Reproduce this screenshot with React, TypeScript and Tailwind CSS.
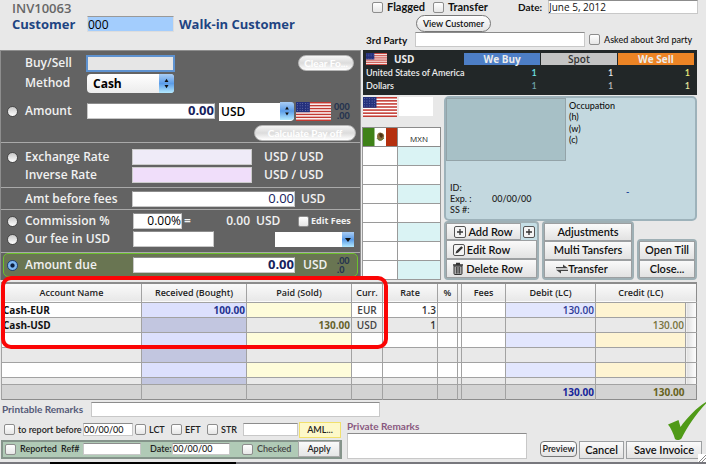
import React from "react";

const CHECK =
  "m-0 h-[11px] w-[11px] shrink-0 appearance-none rounded-[2px] border border-[#8d8d8d] bg-linear-to-b from-white to-[#e6e6e6] checked:bg-[#5b9be0]";
const RADIO =
  "m-0 h-[11px] w-[11px] shrink-0 appearance-none rounded-full border border-[#4a4a4a] bg-linear-to-b from-[#c9c9c9] to-white";
const FIELD =
  "min-w-0 rounded-none border border-[#c8c8c8] border-t-[#8c8c8c] bg-white outline-none";
const PILL =
  "h-4 rounded-full border border-[#b5b5b5] bg-linear-to-b from-[#f4f4f4] via-[#dcdcdc] to-white text-[10px] leading-[14px] font-bold whitespace-nowrap text-white font-['Lato','Open_Sans',sans-serif]";
const SQUARE =
  "flex items-center justify-center border border-[#9c9fa1] bg-linear-to-b from-[#fafafa] to-[#e2e2e2] text-[11px] leading-[14px] font-semibold whitespace-nowrap text-[#111] font-['Lato','Open_Sans',sans-serif]";
const DARK_LABEL = "text-[12px] leading-4 font-semibold text-[#f1f1f1]";

function UsFlag({ className }: { className: string }) {
  const stripes = [0, 2, 4, 6, 8, 10, 12];
  const stars = [1, 2.6, 4.2, 5.8];
  return (
    <svg viewBox="0 0 24 13" preserveAspectRatio="none" className={className} aria-hidden="true">
      <rect width="24" height="13" fill="#fff" />
      {stripes.map((y) => (
        <rect key={y} y={y} width="24" height="1" fill="#c33a32" />
      ))}
      <rect width="9.5" height="7" fill="#24307c" />
      {stars.map((y) =>
        [1, 2.8, 4.6, 6.4, 8.2].map((x) => (
          <circle key={`${x}-${y}`} cx={x} cy={y} r="0.25" fill="#c8cdf0" />
        ))
      )}
    </svg>
  );
}

function MexFlag() {
  return (
    <svg viewBox="0 0 34 18" preserveAspectRatio="none" className="block h-full w-full" aria-hidden="true">
      <rect width="34" height="18" fill="#fff" />
      <rect width="11.5" height="18" fill="#3f8218" />
      <rect x="23" width="11" height="18" fill="#b5300f" />
      <path d="M14 8.5c0-3 2-4.300 4-3.800 2.500.4 3.500 2 3 4.300-.4 2.200-2 3.800-3.800 3.800S14 11 14 8.500z" fill="#8a6b3c" />
      <path d="M16 6l2-1 2 2-1 3-2-1z" fill="#4b3517" />
      <path d="M14 10c1 2.500 5 3 7 0" fill="none" stroke="#5c7f3a" strokeWidth="1" />
    </svg>
  );
}

function Stepper({ className }: { className: string }) {
  return (
    <svg viewBox="0 0 15 18" preserveAspectRatio="none" className={className} aria-hidden="true">
      <defs>
        <linearGradient id="aqua" x1="0" y1="0" x2="0" y2="1">
          <stop offset="0" stopColor="#a9cdf5" />
          <stop offset="0.5" stopColor="#5b9ce8" />
          <stop offset="1" stopColor="#b4eaff" />
        </linearGradient>
      </defs>
      <path d="M0 0h12a3 3 0 0 1 3 3v12a3 3 0 0 1-3 3H0z" fill="url(#aqua)" />
      <path d="M5.500 7.500h4L7.500 4.500zM5.500 10.500h4l-2 3z" fill="#111" />
    </svg>
  );
}

function PlusBox() {
  return (
    <svg viewBox="0 0 12 12" className="h-3 w-3 shrink-0" aria-hidden="true">
      <rect x="0.500" y="0.500" width="11" height="11" rx="1.500" fill="#f4f4f4" stroke="#555" />
      <path d="M6 3v6M3 6h6" stroke="#333" strokeWidth="1.300" />
    </svg>
  );
}

function PencilBox() {
  return (
    <svg viewBox="0 0 12 12" className="h-3 w-3 shrink-0" aria-hidden="true">
      <rect x="0.500" y="0.500" width="11" height="11" rx="1.500" fill="#f4f4f4" stroke="#555" />
      <path d="M2.500 9.500l.8-2.500 5-4.800 1.700 1.600-5 4.900z" fill="#333" />
    </svg>
  );
}

function Trash() {
  return (
    <svg viewBox="0 0 12 13" className="h-[13px] w-3 shrink-0" aria-hidden="true">
      <path d="M4 1.500h4M1 3h10" stroke="#333" strokeWidth="1.400" fill="none" />
      <path d="M2 4h8v7.500a1 1 0 0 1-1 1H3a1 1 0 0 1-1-1z" fill="#aaa" stroke="#333" />
      <path d="M4.500 5v6.500M6 5v6.500M7.500 5v6.500" stroke="#333" strokeWidth="0.800" />
    </svg>
  );
}

function Swap() {
  return (
    <svg viewBox="0 0 12 10" className="h-[10px] w-3 shrink-0" aria-hidden="true">
      <path d="M0 4.200V3h7V.5L12 4.200zM12 5.800V7H5v2.500L0 5.800z" fill="#444" />
    </svg>
  );
}

function Invoice() {
  return (
    <header className="flex h-[50px] flex-col pl-3 font-semibold">
      <div className="h-4 text-[13px] leading-4 text-[#666]">INV10063</div>
      <div className="flex h-4 items-center">
        <label htmlFor="customer" className="w-[75px] text-[13px] leading-4 font-bold text-[#1e4482]">
          Customer
        </label>
        <input
          id="customer"
          defaultValue="000"
          className="h-4 w-[87px] border border-[#ddd] border-t-[#999] bg-[#a3cdfd] text-[12px] leading-[14px] font-medium text-black outline-none"
        />
        <span className="ml-[5px] text-[13px] leading-4 font-bold whitespace-nowrap text-[#1e4482]">
          Walk-in Customer
        </span>
      </div>
    </header>
  );
}

function Exchange() {
  return (
    <form className="flex flex-1 flex-col border-x border-t border-[#8e8e8e] bg-[#636363] text-[13px]">
      <div className="flex h-[92px] flex-col border-b border-[#a9a9a9] pt-[3px]">
        <div className="flex h-[18px] items-center pl-6">
          <label htmlFor="side" className={`w-[61px] ${DARK_LABEL}`}>Buy/Sell</label>
          <input id="side" className="h-[17px] w-[89px] border-2 border-[#5e92d0] bg-[#e6e6e6] outline-none" />
          <button type="button" className={`mr-[6px] ml-auto w-14 ${PILL}`}>Clear Fo...</button>
        </div>
        <div className="mt-px flex h-5 items-center pl-6">
          <label htmlFor="method" className={`w-[62px] ${DARK_LABEL}`}>Method</label>
          <div className="relative h-[19px] w-[87px]">
            <select
              id="method"
              className="h-[19px] w-[87px] appearance-none rounded-[4px] bg-linear-to-b from-white to-[#ececec] pl-[6px] text-[12px] leading-4 font-bold text-black"
            >
              <option>Cash</option>
            </select>
            <Stepper className="pointer-events-none absolute top-0 right-0 h-[19px] w-[15px]" />
          </div>
        </div>
        <div className="mt-2 flex h-5 items-center pl-[6px]">
          <input id="r-amount" type="radio" name="basis" className={RADIO} />
          <label htmlFor="r-amount" className={`ml-[7px] w-[62px] ${DARK_LABEL}`}>Amount</label>
          <input aria-label="Amount" defaultValue="0.00" className={`h-4 w-[128px] text-right text-[13px] font-bold text-[#16215c] ${FIELD}`} />
          <div className="relative ml-1 h-[18px] w-[75px]">
            <select aria-label="Currency" className="h-[18px] w-[75px] appearance-none rounded-r-[4px] bg-white pl-[2px] text-[12px] leading-4 font-semibold text-black">
              <option>USD</option>
            </select>
            <Stepper className="pointer-events-none absolute top-0 right-0 h-[18px] w-[14px]" />
          </div>
          <UsFlag className="ml-[2px] h-[19px] w-[35px]" />
          <div className="ml-[3px] flex flex-col text-right font-['Lato','Open_Sans',sans-serif] text-[9px] leading-[9px] font-black text-[#26344f]">
            <span>000</span>
            <span>.00</span>
          </div>
        </div>
        <button type="button" className={`mt-1 mr-[4px] ml-auto w-[102px] ${PILL}`}>Calculate Pay off</button>
      </div>

      <div className="flex h-[45px] flex-col gap-[2px] border-b border-[#a9a9a9] pt-[6px]">
        <div className="flex h-4 items-center pl-[6px]">
          <input id="r-rate" type="radio" name="basis" className={RADIO} />
          <label htmlFor="r-rate" className={`ml-[7px] w-[107px] ${DARK_LABEL}`}>Exchange Rate</label>
          <input aria-label="Exchange rate" className="h-4 w-[120px] border border-[#ccc] bg-[#efebf8]" />
          <span className={`ml-3 ${DARK_LABEL}`}>USD / USD</span>
        </div>
        <div className="flex h-4 items-center pl-6">
          <label htmlFor="inverse" className={`w-[107px] ${DARK_LABEL}`}>Inverse Rate</label>
          <input id="inverse" className="h-4 w-[120px] border border-[#ccc] bg-[#f0defa]" />
          <span className={`ml-3 ${DARK_LABEL}`}>USD / USD</span>
        </div>
      </div>

      <div className="flex h-[22px] items-center border-b border-[#a9a9a9] pl-6">
        <label htmlFor="before" className={`w-[107px] ${DARK_LABEL}`}>Amt before fees</label>
        <input id="before" defaultValue="0.00" className={`h-4 w-[163px] text-right text-[13px] font-medium text-[#16215c] ${FIELD}`} />
        <span className={`ml-[6px] ${DARK_LABEL}`}>USD</span>
      </div>

      <div className="flex h-[43px] flex-col gap-[2px] border-b border-[#a9a9a9] pt-[3px]">
        <div className="flex h-4 items-center pl-[6px]">
          <input id="r-comm" type="radio" name="basis" className={RADIO} />
          <label htmlFor="r-comm" className={`ml-[7px] w-[108px] ${DARK_LABEL}`}>Commission %</label>
          <input aria-label="Commission percent" defaultValue="0.00%" className={`h-4 w-[49px] text-right text-[12px] font-medium text-black ${FIELD}`} />
          <span className={`ml-[2px] flex w-[66px] justify-between whitespace-nowrap ${DARK_LABEL}`}>
            <span>=</span>
            <span>0.00</span>
          </span>
          <span className={`ml-[6px] w-[42px] ${DARK_LABEL}`}>USD</span>
          <input id="edit-fees" type="checkbox" className={CHECK} />
          <label htmlFor="edit-fees" className="ml-[2px] text-[9px] leading-3 font-bold whitespace-nowrap text-[#f1f1f1]">
            Edit Fees
          </label>
        </div>
        <div className="flex h-4 items-center pl-[6px]">
          <input id="r-fee" type="radio" name="basis" className={RADIO} />
          <label htmlFor="r-fee" className={`ml-[7px] w-[108px] ${DARK_LABEL}`}>Our fee in USD</label>
          <input aria-label="Our fee" className={`h-4 w-[81px] ${FIELD}`} />
          <div className="relative mr-[6px] ml-auto h-[15px] w-[79px]">
            <select aria-label="Fee type" className="block h-[15px] w-[79px] appearance-none bg-white text-[11px]">
              <option></option>
            </select>
            <svg viewBox="0 0 12 15" className="pointer-events-none absolute top-0 right-0 h-[15px] w-3" aria-hidden="true">
              <rect width="12" height="15" fill="url(#aqua)" />
              <path d="M3 6h6L6 10z" fill="#111" />
            </svg>
          </div>
        </div>
      </div>

      <div className="mx-[2px] flex h-6 items-center rounded-[5px] border border-[#6cc02c] bg-[#697552] pl-[3px]">
        <input
          id="r-due"
          type="radio"
          name="basis"
          defaultChecked
          className="m-0 h-[11px] w-[11px] shrink-0 appearance-none rounded-full border border-[#1f3f78] bg-radial from-[#0b1d3d] from-25% to-[#7fb8f2] to-40%"
        />
        <label htmlFor="r-due" className={`ml-[7px] w-[108px] ${DARK_LABEL}`}>Amount due</label>
        <input aria-label="Amount due" defaultValue="0.00" className={`h-4 w-[162px] text-right text-[13px] font-bold text-[#16215c] ${FIELD}`} />
        <span className={`ml-2 w-[34px] ${DARK_LABEL}`}>USD</span>
        <div className="flex flex-col font-['Lato','Open_Sans',sans-serif] text-[9px] leading-[9px] font-black text-[#26344f]">
          <span>.00</span>
          <span>.0</span>
        </div>
      </div>
    </form>
  );
}

function Party() {
  return (
    <div className="flex h-[50px] flex-col text-[11px] font-semibold text-[#111]">
      <div className="flex h-[14px] items-center pl-[10px] font-bold">
        <input id="flagged" type="checkbox" className={CHECK} />
        <label htmlFor="flagged" className="ml-1 w-[46px] font-['Lato','Open_Sans',sans-serif] text-[11px] leading-[14px]">Flagged</label>
        <input id="transfer" type="checkbox" className={CHECK} />
        <label htmlFor="transfer" className="ml-1 w-[70px] font-['Lato','Open_Sans',sans-serif] text-[11px] leading-[14px]">Transfer</label>
        <label htmlFor="date" className="w-[30px] font-['Lato','Open_Sans',sans-serif] text-[10px] leading-[14px]">Date:</label>
        <input id="date" defaultValue="June 5, 2012" className={`mr-2 h-[14px] flex-1 text-[10px] font-medium ${FIELD}`} />
      </div>
      <button type="button" className="mt-px ml-[54px] h-[17px] w-[75px] rounded-full border border-[#777] bg-linear-to-b from-white to-[#e4e4e4] font-['Lato','Open_Sans',sans-serif] text-[9px] leading-[14px] whitespace-nowrap">
        View Customer
      </button>
      <div className="flex h-[15px] items-center pl-1 font-['Lato','Open_Sans',sans-serif]">
        <label htmlFor="party" className="w-[49px] text-[10px] leading-[14px] font-bold whitespace-nowrap">3rd Party</label>
        <input id="party" className={`h-[15px] w-[170px] ${FIELD}`} />
        <input id="asked" type="checkbox" className={`ml-1 ${CHECK}`} />
        <label htmlFor="asked" className="ml-1 text-[9px] leading-[14px] font-medium whitespace-nowrap">
          Asked about 3rd party
        </label>
      </div>
    </div>
  );
}

function Rates() {
  return (
    <div className="mr-[9px] ml-px h-[45px] bg-[#222728] px-[3px] pt-[3px]">
      <table className="w-full table-fixed border-collapse font-['Lato','Open_Sans',sans-serif] text-[9px] leading-[13px] font-semibold text-[#ececec]">
        <colgroup>
          <col className="w-[98px]" />
          <col />
          <col />
          <col />
        </colgroup>
        <thead>
          <tr className="h-3 font-['Open_Sans','Noto_Sans',sans-serif] text-[10px] leading-3">
            <th className="p-0 text-left font-bold">
              <div className="flex items-center gap-[7px]">
                <UsFlag className="h-3 w-[21px]" />
                USD
              </div>
            </th>
            <th className="border-r border-[#222728] bg-[#4d7ec6] p-0 font-bold">We Buy</th>
            <th className="border-r border-[#222728] bg-[#c3c3c3] p-0 font-semibold text-[#333]">Spot</th>
            <th className="bg-[#ec8425] p-0 font-bold">We Sell</th>
          </tr>
        </thead>
        <tbody>
          <tr>
            <td className="p-0 pt-px whitespace-nowrap">United States of America</td>
            <td className="p-0 pr-1 text-right text-[#6fe4e6]">1</td>
            <td className="p-0 pr-1 text-right">1</td>
            <td className="p-0 pr-1 text-right text-[#eef07a]">1</td>
          </tr>
          <tr>
            <td className="p-0">Dollars</td>
            <td className="p-0 pr-1 text-right text-[#6fa3a8]">1</td>
            <td className="p-0 pr-1 text-right text-[#bbb]">1</td>
            <td className="p-0 pr-1 text-right text-[#e6e8a0]">1</td>
          </tr>
        </tbody>
      </table>
    </div>
  );
}

function CurrencyGrid() {
  return (
    <div className="flex w-[79px] shrink-0 flex-col">
      <div className="mt-[2px] flex h-[30px] gap-[2px] pl-px">
        <UsFlag className="h-5 w-[34px]" />
        <div className="h-[19px] w-[34px] bg-white" />
      </div>
      <table className="flex-1 table-fixed border-collapse border border-[#8b8b8b] bg-white text-[8px]">
        <colgroup>
          <col className="w-[35px]" />
          <col />
        </colgroup>
        <thead>
          <tr className="h-[19px]">
            <th className="h-[19px] border border-[#8b8b8b] p-0">
              <div className="h-[18px]"><MexFlag /></div>
            </th>
            <th className="border border-[#8b8b8b] p-0 pt-1 font-medium text-[#222]">MXN</th>
          </tr>
        </thead>
        <tbody>
          {[0, 1, 2, 3, 4, 5, 6].map((r) => (
            <tr key={r} className="h-[19px]">
              <td className="border border-[#9a9a9a] p-0" />
              <td className={r % 2 ? "border border-[#9a9a9a] p-0" : "border border-[#9a9a9a] bg-[#daf3f4] p-0"} />
            </tr>
          ))}
        </tbody>
      </table>
    </div>
  );
}

function CustomerCard() {
  return (
    <div className="flex h-[125px] flex-col rounded-[5px] border-2 border-[#9db2ba] bg-[#c3d8df] font-['Lato','Open_Sans',sans-serif] text-[9px] font-medium text-[#222]">
      <div className="flex gap-[3px]">
        <div className="h-[63px] w-[120px] border border-[#93a3a8] bg-[#a7c0c6]" />
        <div className="text-[#111]">
          <div className="h-[13px] leading-[15px]">Occupation</div>
          <div className="h-3 leading-3">(h)</div>
          <div className="h-[11px] leading-[11px]">(w)</div>
          <div className="h-3 leading-3">(c)</div>
        </div>
      </div>
      <div className="mt-[21px] flex pl-1 leading-[11px]">
        <dl className="grid grid-cols-[42px_134px]">
          <dt>ID:</dt>
          <dd />
          <dt>Exp. :</dt>
          <dd>00/00/00</dd>
          <dt>SS #:</dt>
          <dd />
        </dl>
        <span className="pt-1 font-bold text-[#24499a]">-</span>
      </div>
    </div>
  );
}

function Actions() {
  return (
    <div className="flex flex-1 items-end gap-[3px]">
      <div className="flex h-[59px] w-[95px] flex-col rounded-[4px] border-2 border-[#9fb0b5] bg-[#c5dfe6]">
        <div className="flex flex-1">
          <button type="button" className={`w-[75px] gap-[2px] ${SQUARE}`}><PlusBox />Add Row</button>
          <button type="button" aria-label="Add" className="flex flex-1 items-center justify-center"><PlusBox /></button>
        </div>
        <button type="button" className={`flex-1 gap-[2px] pr-5 ${SQUARE}`}><PencilBox />Edit Row</button>
        <button type="button" className={`flex-1 gap-[2px] pr-2 ${SQUARE}`}><Trash />Delete Row</button>
      </div>
      <div className="flex h-[59px] w-[92px] flex-col rounded-[4px] border-2 border-[#9fb0b5]">
        <button type="button" className={`flex-1 ${SQUARE}`}>Adjustments</button>
        <button type="button" className={`flex-1 ${SQUARE}`}>Multi Tansfers</button>
        <button type="button" className={`flex-1 pr-3 ${SQUARE}`}><Swap />Transfer</button>
      </div>
      <div className="flex h-[41px] flex-1 flex-col rounded-[4px] border-2 border-[#9fb0b5] bg-[#c5dfe6]">
        <button type="button" className={`flex-1 ${SQUARE}`}>Open Till</button>
        <button type="button" className={`flex-1 ${SQUARE}`}>Close...</button>
      </div>
    </div>
  );
}

const ROWS = [
  { name: "Cash-EUR", received: "100.00", paid: "", curr: "EUR", rate: "1.3", debit: "130.00", credit: "" },
  { name: "Cash-USD", received: "", paid: "130.00", curr: "USD", rate: "1", debit: "", credit: "130.00" },
  { name: "", received: "", paid: "", curr: "", rate: "", debit: "", credit: "" },
  { name: "", received: "", paid: "", curr: "", rate: "", debit: "", credit: "" },
  { name: "", received: "", paid: "", curr: "", rate: "", debit: "", credit: "" },
  { name: "", received: "", paid: "", curr: "", rate: "", debit: "", credit: "" },
];

const CELL = "border-x border-[#a2a2a2] p-0 px-px overflow-hidden whitespace-nowrap";

function Ledger() {
  return (
    <div className="relative mt-[2px] mr-[9px] ml-px">
      <table className="w-full table-fixed border-collapse border border-t-2 border-[#8c8c8c] text-[10px] leading-3 font-semibold text-[#333]">
        <colgroup>
          <col className="w-[140px]" />
          <col className="w-[105px]" />
          <col className="w-[105px]" />
          <col className="w-[31px]" />
          <col className="w-[55px]" />
          <col className="w-[20px]" />
          <col className="w-[4px]" />
          <col className="w-[44px]" />
          <col className="w-[90px]" />
          <col />
          <col className="w-[11px]" />
        </colgroup>
        <thead>
          <tr className="h-[19px] border-b border-[#a2a2a2] bg-linear-to-b from-[#fbfbfb] to-[#e8e8e8] text-[9px] text-[#222]">
            <th className={`${CELL} font-semibold`}>Account Name</th>
            <th className={`${CELL} font-semibold`}>Received (Bought)</th>
            <th className={`${CELL} font-semibold`}>Paid (Sold)</th>
            <th className={`${CELL} font-semibold`}>Curr.</th>
            <th className={`${CELL} font-semibold`}>Rate</th>
            <th className={`${CELL} font-semibold`}>%</th>
            <th className={CELL} />
            <th className={`${CELL} font-semibold`}>Fees</th>
            <th className={`${CELL} font-semibold`}>Debit (LC)</th>
            <th className="p-0 font-semibold">Credit (LC)</th>
            <th className="p-0" />
          </tr>
        </thead>
        <tbody>
          {ROWS.map((row, i) => {
            const odd = i % 2 === 1;
            return (
              <tr
                key={i}
                className={`border-b border-[#a2a2a2] ${i === 5 ? "h-[7px] leading-[5px]" : "h-[15px]"} ${odd ? "bg-[#e9e9e9]" : "bg-white"}`}
              >
                <td className={`${CELL} font-bold text-[#111]`}>{row.name}</td>
                <td className={`${CELL} text-right font-bold text-[#24338f] ${odd ? "bg-[#c2c6e0]" : "bg-[#dce0fd]"}`}>{row.received}</td>
                <td className={`${CELL} text-right font-bold text-[#66622c] ${odd ? "" : "bg-[#fefcda]"}`}>{row.paid}</td>
                <td className={`${CELL} text-center text-[#444]`}>{row.curr}</td>
                <td className={`${CELL} text-right`}>{row.rate}</td>
                <td className={CELL} />
                <td className={CELL} />
                <td className={CELL} />
                <td className={`${CELL} text-right text-[#2c3a96] ${odd ? "" : "bg-[#e2e6fd]"}`}>{row.debit}</td>
                <td className={`${CELL} text-right text-[#77733c] ${odd ? "" : "bg-[#fef4d2]"}`}>{row.credit}</td>
                <td className="bg-linear-to-r from-[#e0e0e0] to-white p-0" />
              </tr>
            );
          })}
        </tbody>
        <tfoot>
          <tr className="h-[15px] bg-[#d3d3d3] font-bold">
            <td className={CELL} />
            <td className={CELL} />
            <td className={CELL} />
            <td className={CELL} />
            <td className={CELL} />
            <td className={CELL} />
            <td className={CELL} />
            <td className={CELL} />
            <td className={`${CELL} text-right text-[#16259a]`}>130.00</td>
            <td className="p-0 pr-px text-right text-[#66621c]">130.00</td>
            <td className="p-0" />
          </tr>
        </tfoot>
      </table>
      <div className="pointer-events-none absolute -top-[6px] left-0 h-[73px] w-[387px] rounded-[10px] border-4 border-[#fb0505]" />
    </div>
  );
}

function Footer() {
  return (
    <footer className="flex flex-1 flex-col font-['Lato','Open_Sans',sans-serif] text-[9px] font-semibold text-[#222]">
      <div className="mt-[2px] flex h-[15px] items-center pl-[2px]">
        <label htmlFor="printable" className="w-[89px] text-[10px] leading-[14px] font-bold whitespace-nowrap text-[#555a78]">Printable Remarks</label>
        <input id="printable" className={`h-[15px] w-[289px] ${FIELD}`} />
      </div>
      <div className="flex flex-1">
        <div className="flex w-[347px] shrink-0 flex-col pt-[5px]">
          <div className="flex h-[16px] items-center pl-1">
            <input id="report" type="checkbox" className={CHECK} />
            <label htmlFor="report" className="ml-[3px] w-[65px] whitespace-nowrap">to report before</label>
            <input aria-label="Report before date" defaultValue="00/00/00" className={`h-[13px] w-[50px] font-medium ${FIELD}`} />
            <input id="lct" type="checkbox" className={`ml-[2px] ${CHECK}`} />
            <label htmlFor="lct" className="ml-[3px] w-[22px]">LCT</label>
            <input id="eft" type="checkbox" className={CHECK} />
            <label htmlFor="eft" className="ml-[3px] w-[22px]">EFT</label>
            <input id="str" type="checkbox" className={CHECK} />
            <label htmlFor="str" className="ml-[3px] w-[22px]">STR</label>
            <input aria-label="Report type" className={`h-[13px] w-[55px] ${FIELD}`} />
            <button type="button" className="ml-px h-4 w-[42px] border border-[#f1e06c] bg-[#fdf8c8] leading-3">AML...</button>
          </div>
          <div className="mt-[2px] mr-[5px] ml-px flex h-[19px] items-center border-2 border-[#85948b] bg-[#b0cab6] pl-[2px]">
            <input id="reported" type="checkbox" className={CHECK} />
            <label htmlFor="reported" className="ml-1 w-[41px]">Reported</label>
            <label htmlFor="ref" className="w-[22px]">Ref#</label>
            <input id="ref" className={`h-3 w-[58px] ${FIELD}`} />
            <label htmlFor="rdate" className="ml-[9px] w-[22px]">Date:</label>
            <input id="rdate" defaultValue="00/00/00" className={`h-3 w-[58px] font-medium ${FIELD}`} />
            <input id="checked" type="checkbox" className={`ml-3 ${CHECK}`} />
            <label htmlFor="checked" className="ml-1 flex-1 text-[#444]">Checked</label>
            <button type="button" className="h-4 w-[42px] border border-[#aaa] bg-linear-to-b from-[#fafafa] to-[#e6e6e6] leading-3">Apply</button>
          </div>
        </div>
        <div className="flex w-[180px] shrink-0 flex-col">
          <label htmlFor="private" className="mt-[2px] h-[14px] text-[10px] leading-[14px] font-bold text-[#89587f]">Private Remarks</label>
          <textarea id="private" className={`block h-[26px] w-[180px] resize-none ${FIELD}`} />
        </div>
        <div className="relative flex flex-1 items-start justify-end gap-[2px] pt-[24px] pr-1">
          <button type="button" className="h-4 w-[37px] rounded-[4px] border border-[#777] bg-linear-to-b from-white to-[#e4e4e4] leading-3">Preview</button>
          <button type="button" className={`h-[18px] w-[45px] ${SQUARE}`}>Cancel</button>
          <button type="button" className={`h-[18px] w-[76px] ${SQUARE}`}>Save Invoice</button>
          <svg viewBox="0 0 38 38" className="absolute -top-[15px] right-0 h-[38px] w-[38px]" aria-hidden="true">
            <path d="M38 0C29 5 18 17 12.500 25L10.500 18 0 22.500C3 26 5.500 32 7 37c2 1.500 4.500 1.500 6.500-.5C19 25 28 12 38 1.500z" fill="#4f9a17" />
          </svg>
          <svg viewBox="0 0 8 8" className="absolute right-0 bottom-0 h-2 w-2" aria-hidden="true">
            <rect width="8" height="8" fill="#fff" />
            <path d="M1 8l7-7M4 8l4-4" stroke="#888" />
          </svg>
        </div>
      </div>
      <div className="flex h-[2px] bg-[#77777d]">
        <div className="ml-[50px] w-[186px] bg-black" />
      </div>
    </footer>
  );
}

export default function App() {
  return (
    <main className="flex min-h-screen flex-col overflow-hidden bg-[#e8e8e8] font-['Open_Sans','Noto_Sans',sans-serif]">
      <div className="flex h-[280px]">
        <section className="flex w-[361px] shrink-0 flex-col">
          <Invoice />
          <Exchange />
        </section>
        <section className="ml-px flex min-w-0 flex-1 flex-col">
          <Party />
          <Rates />
          <div className="flex flex-1 gap-[3px] pr-[9px]">
            <CurrencyGrid />
            <div className="flex min-w-0 flex-1 flex-col pt-px">
              <CustomerCard />
              <Actions />
            </div>
          </div>
        </section>
      </div>
      <Ledger />
      <Footer />
    </main>
  );
}
